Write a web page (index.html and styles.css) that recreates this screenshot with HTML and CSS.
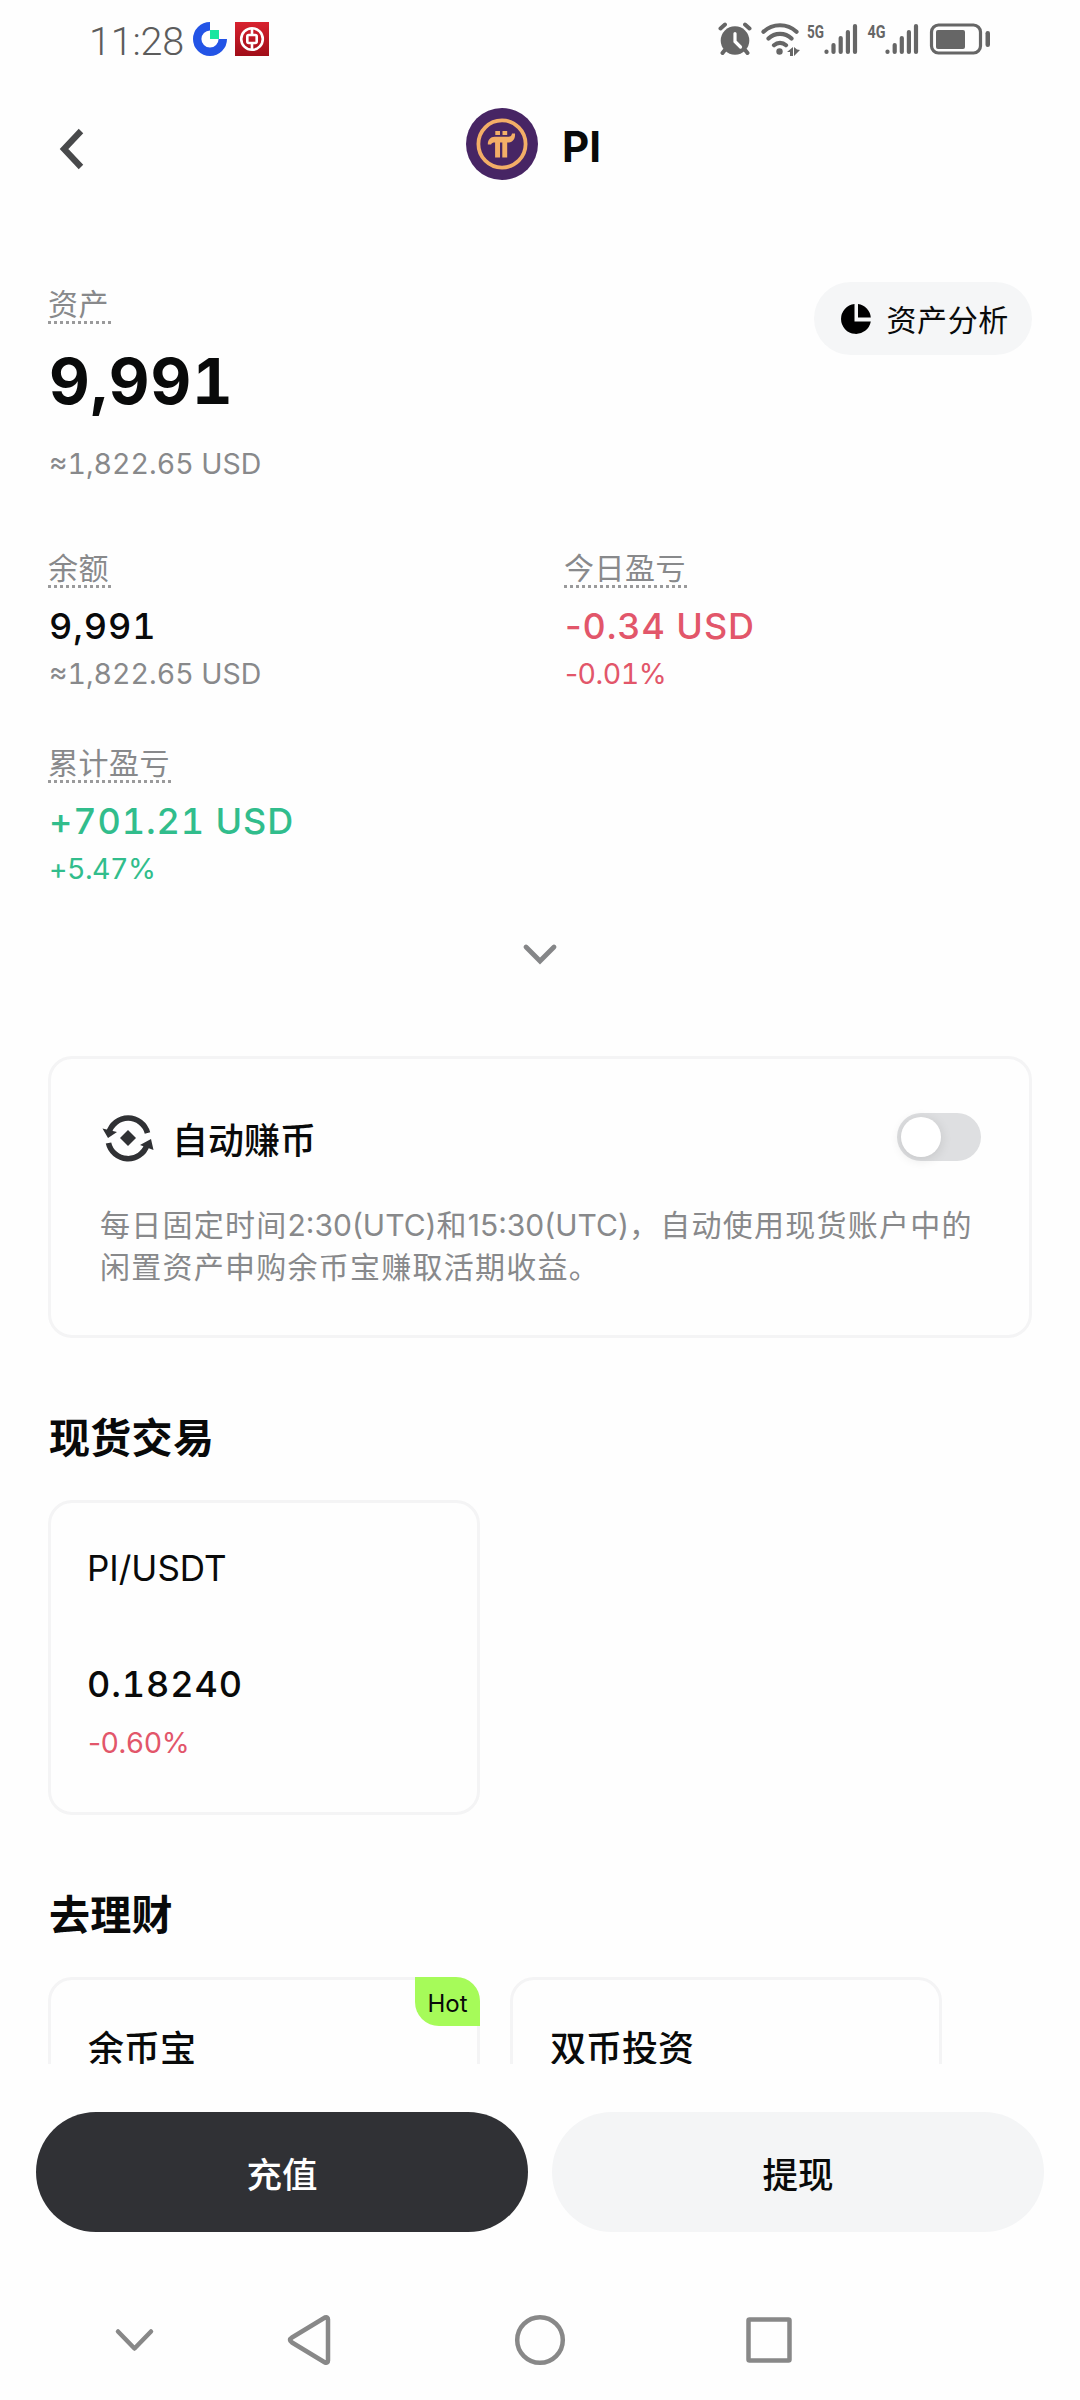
FILE: index.html
```html
<!DOCTYPE html>
<html lang="zh-CN">
<head>
<meta charset="utf-8">
<title>PI</title>
<link rel="stylesheet" href="styles.css">
</head>
<body>
<div class="app">
  <div class="status">
    <span class="time">11:28</span>
    <svg class="notif" width="34" height="34" viewBox="0 0 34 34"><path d="M17 4.200A12.800 12.800 0 1 0 29.800 17" fill="none" stroke="#2354e6" stroke-width="8.400"/><path fill="#17e6a1" d="M17 8h9v9h-9z"/></svg>
    <svg class="boc" width="34" height="34" viewBox="0 0 34 34"><defs><linearGradient id="red" x1="0" y1="0" x2="0" y2="1"><stop offset="0" stop-color="#d8222f"/><stop offset="1" stop-color="#a00d18"/></linearGradient></defs><path fill="url(#red)" d="M0 0h34v34H0z"/><g fill="none" stroke="#fff" stroke-width="2.600"><circle cx="17" cy="17" r="10.800"/><rect x="12.300" y="13" width="9.400" height="8" rx="1.500"/><path d="M17 6v7M17 21v7"/></g></svg>
    <svg class="system" width="276" height="40" viewBox="0 0 276 40" fill="#666">
      <circle cx="17" cy="21.500" r="14.300"/><path d="M2.500 9.500 7 5.500M27 5.500l4.500 4M6.500 31.500 4.500 34M27.500 31.500l2 2.500" fill="none" stroke="#666" stroke-width="4" stroke-linecap="round"/><path d="M17 14.500v8l5.500 5.500" fill="none" stroke="#fff" stroke-width="3.200" stroke-linecap="round"/>
      <g fill="none" stroke="#666" stroke-width="4.200" stroke-linecap="round"><path d="M45.500 12.800a24 24 0 0 1 33 0M50.500 19.600a16.500 16.500 0 0 1 23 0M56 26.200a9 9 0 0 1 12 0"/></g><circle cx="61.500" cy="32.500" r="3.200"/><path d="m75 28-6 5h3v4h3zM76 28v9l6-6-3-.5z"/>
      <text class="net" x="89" y="18.500" textLength="17" lengthAdjust="spacingAndGlyphs">5G</text><text class="net" x="149.500" y="18.500" textLength="18" lengthAdjust="spacingAndGlyphs">4G</text>
      <g fill="none" stroke="#666" stroke-width="4.200" stroke-linecap="round"><path d="M108.500 32.500v.5M115.500 26v7M122.700 19v14M129.900 13v20M137 7v26M169.500 32.500v.5M176.700 26v7M183.800 19v14M190.900 13v20M198 7v26"/></g>
      <rect x="213.500" y="6" width="49" height="28" rx="7" fill="none" stroke="#666" stroke-width="3.200"/><rect x="218" y="11" width="29" height="19" rx="2"/><rect x="267.500" y="12" width="4.500" height="16" rx="2.200"/>
    </svg>
  </div>
  <header class="header">
    <svg class="back" width="32" height="44" viewBox="0 0 32 44"><path d="M25 4 8 22 25 40" fill="none" stroke="#48494b" stroke-width="6.200"/></svg>
    <svg width="72" height="72" viewBox="0 0 72 72"><circle cx="36" cy="36" r="36" fill="#472564"/><circle cx="36" cy="36" r="23.600" fill="none" stroke="#f3ae67" stroke-width="3.800"/><g fill="#f3ae67"><path d="M29.300 23h4.700v4h-4.700zM36.500 23h4.700v4h-4.700z"/><path d="M21.800 36.500c0-4.500 2.500-7.700 7-7.700h13.500c2.500 0 3.200-1 3.700-3.300h3c.5 5-2 8.500-6 9h-1.800v15h-4.900v-15H34v15h-4.900v-15c-2.300 0-3.500.5-4 2z"/></g></svg>
    <h1>PI</h1>
  </header>
  <main class="content">
    <section class="summary">
      <div>
        <span class="label">资产</span>
        <div class="total">9,991</div>
        <div class="sub">≈1,822.65 USD</div>
      </div>
      <button class="analysis"><svg width="30" height="30" viewBox="0 0 30 30"><path d="M13.500 0A15 15 0 1 0 29.800 17.500H13.500z"/><path d="M17 0A15 15 0 0 1 29.800 13.500H17z"/></svg><span>资产分析</span></button>
    </section>
    <section class="stats">
      <div><span class="label">余额</span><div class="value">9,991</div><div class="sub">≈1,822.65 USD</div></div>
      <div><span class="label">今日盈亏</span><div class="value down"><span class="sign">-</span>0.34 USD</div><div class="sub percent down"><span class="sign">-</span>0.01%</div></div>
      <div><span class="label">累计盈亏</span><div class="value up">+701.21 USD</div><div class="sub percent up">+5.47%</div></div>
    </section>
    <svg class="expand" width="36" height="24" viewBox="0 0 36 24"><path d="m4 4 14 14L32 4" fill="none" stroke="#858688" stroke-width="4.800" stroke-linecap="round"/></svg>
    <section class="card earn">
      <div class="earn-head">
        <svg width="54" height="54" viewBox="0 0 54 54" fill="#303134"><path d="M7.800 22A20 20 0 0 1 46.500 22" fill="none" stroke="#303134" stroke-width="5.600"/><path d="M1.500 17.500 16 21 7 27zM52.500 39 50 28 39 34z"/><path d="M7.500 32A20 20 0 0 0 46 34" fill="none" stroke="#303134" stroke-width="5.600"/><path d="m27 19 8 8-8 8-8-8z"/></svg>
        <h3>自动赚币</h3>
        <span class="switch"><i></i></span>
      </div>
      <p>每日固定时间<span>2:30(UTC)</span>和<span>15:30(UTC)</span>，自动使用现货账户中的<br>闲置资产申购余币宝赚取活期收益。</p>
    </section>
    <h2>现货交易</h2>
    <div class="cards">
      <div class="card tile"><div class="name">PI/USDT</div><div class="value price">0.18240</div><div class="sub percent down"><span class="sign">-</span>0.60%</div></div>
    </div>
    <h2>去理财</h2>
    <div class="cards">
      <div class="card tile product"><div class="name">余币宝</div><span class="hot">Hot</span></div>
      <div class="card tile product"><div class="name">双币投资</div></div>
    </div>
  </main>
  <footer class="actions">
    <button class="primary">充值</button>
    <button class="secondary">提现</button>
  </footer>
  <nav class="sysnav">
    <svg width="60" height="60" viewBox="0 0 60 60"><path d="m14 21.500 16.500 17L47 21.500"/></svg>
    <svg width="60" height="60" viewBox="0 0 60 60"><path d="M46 7.500 13 27.500q-4 2.500 0 5L46 52.500q3 1 3-2v-41q0-3-3-2z"/></svg>
    <svg width="60" height="60" viewBox="0 0 60 60"><circle cx="30" cy="30" r="22.800"/></svg>
    <svg width="60" height="60" viewBox="0 0 60 60"><rect x="9.500" y="9.500" width="41" height="41" rx="1"/></svg>
  </nav>
</div>
</body>
</html>
```
FILE: styles.css
```css
* { box-sizing: border-box; }
body { margin: 0; background: #fefefe; color: #090a0a; font-family: Inter, "Noto Sans CJK SC", sans-serif; }
h1, h2, h3, p { margin: 0; }
svg { display: block; flex: none; }
button { border: 0; padding: 0; font-family: inherit; color: inherit; }
.app { width: 1080px; height: 2400px; display: flex; flex-direction: column; overflow: hidden; }

.status { height: 80px; display: flex; align-items: flex-start; padding: 22px 86px 0 89px; }
.time { width: 104px; font: 300 39.5px/39px Roboto, sans-serif; color: #5c5c5c; letter-spacing: -0.2px; }
.boc { margin-left: 8px; }
.system { margin: -3px 0 0 auto; }
.net { font: 700 17.5px Roboto, sans-serif; }

.header { height: 128px; display: flex; align-items: center; padding-left: 56px; }
.back { margin: 9px 378px 0 0; }
h1 { margin: 5px 0 0 24px; font-size: 42px; line-height: 50px; font-weight: 650; }

.content { height: 1856px; padding: 74px 48px 0; overflow: hidden; }
.summary { display: flex; justify-content: space-between; align-items: flex-start; }
.summary > div { padding-top: 6px; }
.label { display: block; width: max-content; height: 36px; padding-right: 1.5px; font-size: 30px; line-height: 33px; letter-spacing: 0.5px; color: #88898b;
  background: repeating-linear-gradient(90deg, #9a9a9b 0 3px, transparent 3px 6px) 0 100% / 100% 3px no-repeat; }
.total { margin-top: 25px; padding-left: 1px; font-size: 63px; line-height: 64px; font-weight: 700; letter-spacing: 1px; }
.total, .value, .sub { font-feature-settings: "tnum"; white-space: nowrap; }
.total + .sub { margin-top: 34px; }
.sub { margin-top: 9px; padding-left: 1px; font-size: 28.5px; line-height: 34px; color: #88898b; }
.percent { letter-spacing: -0.5px; }
.value { margin-top: 16px; padding-left: 1px; font-size: 36px; line-height: 44px; font-weight: 500; letter-spacing: 0.9px; }
.sign { font-feature-settings: normal; }
.down { color: #e2566a; }
.up { color: #31bd8c; }
.analysis { width: 218px; height: 73px; border-radius: 37px; background: #f5f6f7; display: flex; align-items: center; gap: 15.5px; padding-left: 27px; font-size: 30px; letter-spacing: 0.6px; }
.analysis span { margin-top: -2px; }
.stats { display: grid; grid-template-columns: 516px 1fr; row-gap: 56px; margin-top: 71px; }
.expand { margin: 57px auto 0; }
.card { border: 3px solid #f4f4f5; border-radius: 24px; }
.earn { height: 282px; margin-top: 89px; padding: 52px 48px 0 50px; }
.earn-head { display: flex; align-items: center; height: 54px; }
h3 { margin-left: 17px; font-size: 36px; font-weight: 500; }
.switch { margin: -2px 0 0 auto; width: 84px; height: 48px; border-radius: 24px; background: #dedfe1; padding: 4px; }
.switch i { display: block; width: 40px; height: 40px; border-radius: 50%; background: #fff; box-shadow: 0 2px 12px rgba(0,0,0,.12); }
.earn p { margin: 39px 0 0 -1px; font-size: 30px; line-height: 42.3px; letter-spacing: 1.25px; color: #88898b; white-space: nowrap; }
.earn p span { letter-spacing: 0; }
h2 { margin-top: 76px; padding-left: 1px; font-size: 41px; line-height: 48px; font-weight: 700; letter-spacing: 0.3px; }
.cards { display: flex; gap: 30px; margin-top: 38px; }
.tile { width: 432px; height: 315px; padding: 43px 36px 0; position: relative; }
.name { font-size: 35px; line-height: 44px; font-weight: 400; }
.product { padding: 47px 36px 0 37px; }
.product .name { font-size: 36px; font-weight: 500; }
.price { margin-top: 72px; padding-left: 0; }
.price + .sub { margin-top: 20px; }
.hot { position: absolute; top: -3px; right: -3px; width: 65px; height: 49px; border-radius: 0 24px 0 24px; background: #a6fb59; font-size: 24px; line-height: 53px; text-align: center; }

.actions { display: flex; gap: 24px; padding: 48px 36px; height: 216px; background: #fefefe; }
.actions button { flex: 1; height: 120px; border-radius: 60px; font-size: 35.5px; font-weight: 500; line-height: 120px; padding-top: 4px; }
.primary { background: #303135; color: #fff; }
.secondary { background: #f4f5f6; }
.sysnav { height: 120px; display: grid; grid-template-columns: 175px 231px 229px 60px; align-items: center; padding-left: 104px; fill: none; stroke: #888; stroke-width: 4.5; stroke-linecap: round; stroke-linejoin: round; }
```
